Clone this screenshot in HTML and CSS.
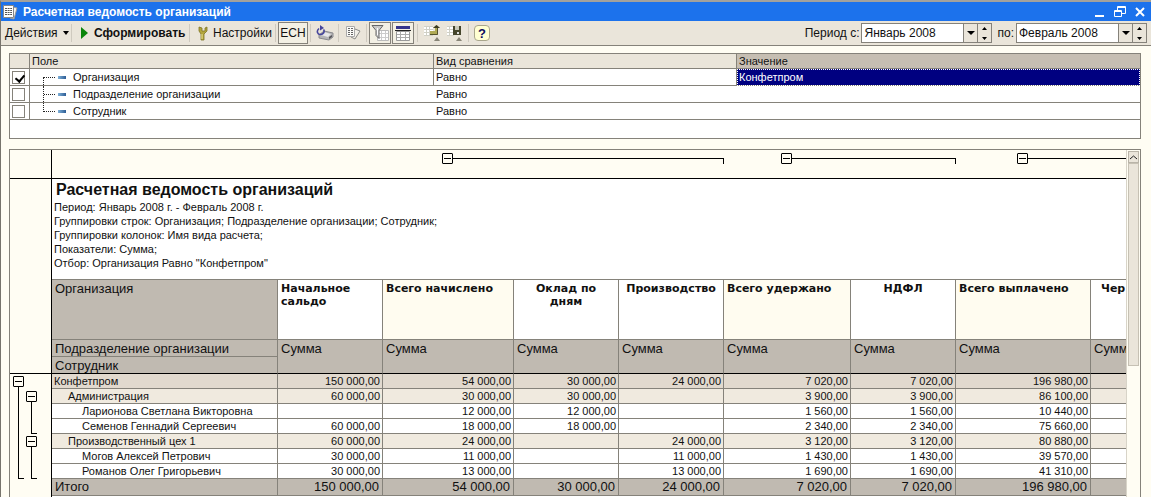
FILE: index.html
```
<!DOCTYPE html>
<html lang="ru">
<head>
  <meta charset="UTF-8">
  <meta name="viewport" content="width=device-width, initial-scale=1.0">
  <title>Расчетная ведомость организаций</title>
  <link rel="stylesheet" href="styles.css">
</head>
<body>
  <header class="titlebar">
    <svg class="title-icon" width="16" height="16" viewBox="0 0 16 16">
      <path d="M11 3l4 1-3 11-4-1z" fill="#f2f2f2" stroke="#999"/>
      <path d="M1.500 1.500h10v12h-10z" fill="#fff" stroke="#888"/>
      <path d="M3 4.500h7M3 6.500h7M3 8.500h7M3 10.500h7" stroke="#555" stroke-dasharray="2 .6"/>
    </svg>
    <h1>Расчетная ведомость организаций</h1>
    <div class="window-buttons">
      <button type="button" aria-label="Свернуть"><svg width="12" height="12"><path d="M1 10h9" stroke="#fff" stroke-width="2"/></svg></button>
      <button type="button" aria-label="Восстановить"><svg width="12" height="12"><path d="M3.500 4V.5h8v7H8M3 1.500h8M.5 4.500h7v6h-7zM1 5.500h7" fill="none" stroke="#fff"/></svg></button>
      <button type="button" aria-label="Закрыть"><svg width="12" height="12"><path d="M2 2l8 8M10 2l-8 8" stroke="#fff" stroke-width="2"/></svg></button>
    </div>
  </header>

  <div class="toolbar">
    <button type="button" class="tool actions">Действия <svg width="7" height="4"><path d="M1 0h6L4 4z"/></svg></button>
    <span class="sep"></span>
    <button type="button" class="tool run"><svg width="7" height="12"><path d="M0 0l7 6-7 6z" fill="#0a850a"/></svg>Сформировать</button>
    <span class="sep"></span>
    <button type="button" class="tool settings">
      <svg width="10" height="15" viewBox="0 0 10 15"><path d="M1 1v4l2 3v6h3V8l3-3V1L7 2v3H4V2z" fill="#b3a63c" stroke="#7d7324" stroke-width=".8"/><path d="M4 8v5" stroke="#eee59a"/></svg>Настройки</button>
    <span class="sep"></span>
    <button type="button" class="tool pressed esn">ЕСН</button>
    <span class="sep"></span>
    <button type="button" class="tool icon" aria-label="Обновить">
      <svg width="18" height="16" viewBox="0 0 18 16"><path d="M3 10l5-4 9 2v4l-4 3-10-2z" fill="#b4b4b6" stroke="#8a8a8e"/><path d="M5 10l3-3 7 2-3 3z" fill="#e6e6e8"/><path d="M13 12l3-2v2l-3 2z" fill="#55555a"/><path d="M3 3.500c-3 2.500-1.500 6 1.500 6S9 6.500 7.500 4.500" fill="none" stroke="#45459c" stroke-width="1.600"/><path d="M4 0v5.500L8 3z" fill="#45459c"/></svg>
    </button>
    <span class="sep"></span>
    <button type="button" class="tool icon" aria-label="Расшифровка">
      <svg width="16" height="16" viewBox="0 0 16 16"><path d="M10 4l5 2-5 8-4-2z" fill="#f1efe8" stroke="#8b8b88"/><path d="M1.500 1.500h8v10h-8z" fill="#fbfbf8" stroke="#aaa"/><path d="M3 3.500h5M3 5.500h5M3 7.500h5M3 9.500h5" stroke="#666" stroke-dasharray="2 1"/></svg>
    </button>
    <span class="sep"></span>
    <button type="button" class="tool pressed square" aria-label="Отбор">
      <svg width="18" height="18" viewBox="0 0 18 18"><path d="M6.500 6.500h11v10h-11z" fill="#fff" stroke="#bbb"/><path d="M7 9.500h10M7 13.500h10M10.500 7v9M14.500 7v9" stroke="#ccc"/><path d="M1 1.500h11L8 6.500v8l-3-3v-5z" fill="#c9c9c9" stroke="#666"/><path d="M6.500 4v7" stroke="#fff"/></svg>
    </button>
    <button type="button" class="tool pressed square" aria-label="Заголовок">
      <svg width="18" height="18" viewBox="0 0 18 18"><path d="M2.500 7.500h13v9h-13z" fill="#fff" stroke="#999"/><path d="M3 10.500h12M3 13.500h12M6.500 8v8M11.500 8v8" stroke="#aaa"/><path d="M2 2h14v3H2z" fill="#34348c"/><path d="M1 6.500h16" stroke="#222"/></svg>
    </button>
    <span class="sep"></span>
    <button type="button" class="tool icon" aria-label="Восстановить значения">
      <svg width="18" height="18" viewBox="0 0 18 18"><path d="M1 2h9v9H1z" fill="#fff"/><path d="M1 2.500h9M1 5.500h9M1 8.500h9M1 11.500h9M3.500 2v9M6.500 2v9" stroke="#d0d0c6"/><path d="M7 7h5V4h-2l3.500-3L17 4h-2v7H7z" fill="#b0aa55"/><path d="M10 4l3.500-3L17 4z" fill="#3c3c26"/><path d="M14.500 4v6.500H7" fill="none" stroke="#56532c"/><path d="M11 17h6l-3-4z" fill="#888577"/></svg>
    </button>
    <button type="button" class="tool icon" aria-label="Сохранить значения">
      <svg width="18" height="18" viewBox="0 0 18 18"><path d="M1 2h7v9H1z" fill="#fff"/><path d="M1 2.500h7M1 5.500h7M1 8.500h7M1 11.500h7M3.500 2v9" stroke="#d0d0c6"/><path d="M7 2h8v9H7z" fill="#45452c"/><path d="M9 2h4v4H9z" fill="#c9c9b8"/><path d="M11 8h2v2h-2z" fill="#ddd"/><path d="M10 17h6l-3-4z" fill="#888577"/></svg>
    </button>
    <span class="sep"></span>
    <button type="button" class="tool help" aria-label="Справка">?</button>

    <div class="period">
      <label for="from">Период с:</label>
      <div class="combo">
        <input type="text" id="from" value="Январь 2008">
        <button type="button" aria-label="Выбрать"><svg width="8" height="4"><path d="M0 0h8L4 4z"/></svg></button>
        <button type="button" aria-label="Изменить"><svg width="5" height="13"><path d="M0 3h5L2.500 0zM0 10h5l-2.500 3z"/></svg></button>
      </div>
      <label for="to">по:</label>
      <div class="combo">
        <input type="text" id="to" value="Февраль 2008">
        <button type="button" aria-label="Выбрать"><svg width="8" height="4"><path d="M0 0h8L4 4z"/></svg></button>
        <button type="button" aria-label="Изменить"><svg width="5" height="13"><path d="M0 3h5L2.500 0zM0 10h5l-2.500 3z"/></svg></button>
      </div>
    </div>
  </div>

  <main>
    <div class="filter">
      <table>
        <colgroup><col class="f-check"><col class="f-field"><col class="f-kind"><col></colgroup>
        <thead>
          <tr><th></th><th>Поле</th><th>Вид сравнения</th><th class="current">Значение</th></tr>
        </thead>
        <tbody>
          <tr class="active">
            <td><input type="checkbox" id="f1" checked></td>
            <td><label for="f1" class="node first">Организация</label></td>
            <td>Равно</td>
            <td class="selected">Конфетпром</td>
          </tr>
          <tr>
            <td><input type="checkbox" id="f2"></td>
            <td><label for="f2" class="node">Подразделение организации</label></td>
            <td>Равно</td>
            <td></td>
          </tr>
          <tr>
            <td><input type="checkbox" id="f3"></td>
            <td><label for="f3" class="node last">Сотрудник</label></td>
            <td>Равно</td>
            <td></td>
          </tr>
        </tbody>
      </table>
    </div>

    <div class="report">
      <div class="corner"></div>
      <div class="col-groups">
        <div class="col-group accrued"><button type="button" class="toggle" aria-label="Свернуть"></button><i></i></div>
        <div class="col-group held"><button type="button" class="toggle" aria-label="Свернуть"></button><i></i></div>
        <div class="col-group paid"><button type="button" class="toggle" aria-label="Свернуть"></button><i></i></div>
      </div>
      <div class="gutter">
        <div class="row-groups">
          <div class="row-group all"><button type="button" class="toggle" aria-label="Свернуть"></button><i></i></div>
          <div class="row-group admin"><button type="button" class="toggle" aria-label="Свернуть"></button><i></i></div>
          <div class="row-group shop"><button type="button" class="toggle" aria-label="Свернуть"></button><i></i></div>
        </div>
      </div>
      <div class="sheet">
        <div class="summary">
          <h2>Расчетная ведомость организаций</h2>
          <p>Период: Январь 2008 г. - Февраль 2008 г.</p>
          <p>Группировки строк: Организация; Подразделение организации; Сотрудник;</p>
          <p>Группировки колонок: Имя вида расчета;</p>
          <p>Показатели: Сумма;</p>
          <p>Отбор: Организация Равно "Конфетпром"</p>
        </div>
        <table class="data">
          <colgroup>
            <col class="w-name"><col class="w-sum"><col class="w-accrued"><col class="w-sum"><col class="w-sum">
            <col class="w-held"><col class="w-sum"><col class="w-paid"><col class="w-sum">
          </colgroup>
          <thead>
            <tr class="names">
              <th class="dim">Организация</th>
              <th class="left">Начальное сальдо</th>
              <th class="left total">Всего начислено</th>
              <th>Оклад по<br>дням</th>
              <th>Производство</th>
              <th class="left total">Всего удержано</th>
              <th>НДФЛ</th>
              <th class="left total">Всего выплачено</th>
              <th class="cut">Чер</th>
            </tr>
            <tr class="sums">
              <th class="dim">Подразделение организации</th>
              <th class="dim" rowspan="2">Сумма</th>
              <th class="dim" rowspan="2">Сумма</th>
              <th class="dim" rowspan="2">Сумма</th>
              <th class="dim" rowspan="2">Сумма</th>
              <th class="dim" rowspan="2">Сумма</th>
              <th class="dim" rowspan="2">Сумма</th>
              <th class="dim" rowspan="2">Сумма</th>
              <th class="dim" rowspan="2">Сумма</th>
            </tr>
            <tr class="sums"><th class="dim">Сотрудник</th></tr>
          </thead>
          <tbody>
            <tr class="org"><td>Конфетпром</td><td>150 000,00</td><td>54 000,00</td><td>30 000,00</td><td>24 000,00</td><td>7 020,00</td><td>7 020,00</td><td>196 980,00</td><td></td></tr>
            <tr class="dept"><td>Администрация</td><td>60 000,00</td><td>30 000,00</td><td>30 000,00</td><td></td><td>3 900,00</td><td>3 900,00</td><td>86 100,00</td><td></td></tr>
            <tr class="person"><td>Ларионова Светлана Викторовна</td><td></td><td>12 000,00</td><td>12 000,00</td><td></td><td>1 560,00</td><td>1 560,00</td><td>10 440,00</td><td></td></tr>
            <tr class="person"><td>Семенов Геннадий Сергеевич</td><td>60 000,00</td><td>18 000,00</td><td>18 000,00</td><td></td><td>2 340,00</td><td>2 340,00</td><td>75 660,00</td><td></td></tr>
            <tr class="dept"><td>Производственный цех 1</td><td>60 000,00</td><td>24 000,00</td><td></td><td>24 000,00</td><td>3 120,00</td><td>3 120,00</td><td>80 880,00</td><td></td></tr>
            <tr class="person"><td>Могов Алексей Петрович</td><td>30 000,00</td><td>11 000,00</td><td></td><td>11 000,00</td><td>1 430,00</td><td>1 430,00</td><td>39 570,00</td><td></td></tr>
            <tr class="person"><td>Романов Олег Григорьевич</td><td>30 000,00</td><td>13 000,00</td><td></td><td>13 000,00</td><td>1 690,00</td><td>1 690,00</td><td>41 310,00</td><td></td></tr>
          </tbody>
          <tfoot>
            <tr><td>Итого</td><td>150 000,00</td><td>54 000,00</td><td>30 000,00</td><td>24 000,00</td><td>7 020,00</td><td>7 020,00</td><td>196 980,00</td><td></td></tr>
          </tfoot>
        </table>
      </div>
      <div class="scrollbar">
        <button type="button" aria-label="Вверх"><svg width="7" height="5"><path d="M0 4l3.500-3L7 4" fill="none" stroke="#222"/></svg></button>
        <div class="thumb"></div>
      </div>
    </div>
  </main>
</body>
</html>
```
FILE: styles.css
```
* {
  box-sizing: border-box;
}

body {
  margin: 0;
  height: 100vh;
  display: flex;
  flex-direction: column;
  overflow: hidden;
  font-family: "Liberation Sans", Arial, sans-serif;
  font-size: 12px;
  color: #111;
  background: #fffdf3;
  border-top: 2px solid #a3a19c;
  border-left: 1px solid #77746c;
}

h1, h2, p {
  margin: 0;
}

button, input {
  margin: 0;
  padding: 0;
  font: inherit;
  color: inherit;
  border: none;
  background: none;
}

/* window title */
.titlebar {
  height: 19px;
  flex: none;
  display: flex;
  align-items: center;
  padding: 0 5px 0 1px;
  background: #1c72ec;
  color: #fff;
}

.titlebar h1 {
  flex: 1;
  margin-left: 5px;
  font-size: 12px;
  line-height: 16px;
}

.window-buttons {
  display: flex;
  gap: 8px;
}

.window-buttons button,
.window-buttons svg {
  display: block;
  width: 12px;
  height: 12px;
}

/* toolbar */
.toolbar {
  height: 25px;
  flex: none;
  display: flex;
  align-items: center;
  padding: 0 4px;
  background: #eae5da;
  border-bottom: 1px solid #85827a;
}

.tool {
  display: flex;
  align-items: center;
  height: 22px;
  white-space: nowrap;
}

.sep {
  width: 1px;
  height: 18px;
  margin: 0 2px;
  background: #cfcabf;
}

.actions {
  width: 64px;
  gap: 4px;
}

.run {
  width: 113px;
  padding-left: 7px;
  gap: 6px;
  font-weight: bold;
}

.settings {
  width: 81px;
  padding-left: 6px;
  gap: 5px;
}

.pressed {
  justify-content: center;
  background: #f3f0e4;
  border: 1px solid #85827a;
}

.esn {
  width: 30px;
}

.square {
  width: 22px;
  margin-right: 1px;
}

.icon {
  width: 23px;
  justify-content: center;
}

.help {
  width: 16px;
  height: 16px;
  margin-left: 3px;
  justify-content: center;
  font-size: 13px;
  font-weight: bold;
  color: #0c0c60;
  background: #ffffd2;
  border: 1px solid #a9a68c;
  border-radius: 4px;
}

.period {
  display: flex;
  align-items: center;
  margin-left: auto;
}

.period label {
  margin: 0 2px 0 5px;
}

.combo {
  display: flex;
  width: 131px;
  height: 20px;
  border: 1px solid #85827a;
  background: #fff;
}

.combo input {
  flex: 1;
  min-width: 0;
  padding-left: 2px;
}

.combo button {
  width: 14px;
  display: flex;
  align-items: center;
  justify-content: center;
  background: #eae5da;
  border-left: 1px solid #85827a;
}

main {
  flex: 1;
  min-height: 0;
  display: flex;
  flex-direction: column;
  gap: 10px;
  padding: 7px 10px 0 8px;
}

/* filter */
.filter {
  height: 86px;
  flex: none;
  border: 1px solid #85827a;
  background: #fff;
}

.filter table {
  width: 100%;
  table-layout: fixed;
  border-spacing: 0;
  font-size: 11px;
  line-height: 14px;
}

.f-check {
  width: 20px;
}

.f-field {
  width: 404px;
}

.f-kind {
  width: 303px;
}

.filter th,
.filter td {
  height: 17px;
  padding: 0 0 0 2px;
  border-bottom: 1px solid #85827a;
  white-space: nowrap;
}

.filter th {
  height: 15px;
  font-weight: normal;
  text-align: left;
  background: #eae5da;
}

.filter th:not(:last-child),
.filter td:first-child,
.filter .active td:not(:last-child) {
  border-right: 1px solid #85827a;
}

.filter th.current {
  background: #c6beb2;
}

.filter td.selected {
  color: #fff;
  background: #000080;
  outline: 1px dotted #fff;
  outline-offset: -1px;
}

.filter input {
  display: block;
  width: 13px;
  height: 13px;
  appearance: none;
  border: 1px solid #85827a;
  background: #fff;
}

.filter input:checked::after {
  content: "";
  display: block;
  width: 4px;
  height: 7px;
  margin: 1px 0 0 4px;
  border: solid #000;
  border-width: 0 2px 2px 0;
  transform: rotate(40deg);
}

/* dotted tree line with a small bar in front of the name */
.node {
  display: flex;
  align-items: center;
  position: relative;
  height: 16px;
  padding-left: 41px;
}

.node::before {
  content: "";
  position: absolute;
  left: 11px;
  top: 0;
  width: 11px;
  height: 16px;
  border-left: 1px dotted #222;
  background: repeating-linear-gradient(90deg, #222 0 1px, transparent 1px 2px) 0 8px / 100% 1px no-repeat;
}

.node.first::before {
  top: 8px;
  height: 8px;
  background-position: 0 0;
}

.node.last::before {
  height: 9px;
}

.node::after {
  content: "";
  position: absolute;
  left: 26px;
  top: 7px;
  width: 8px;
  height: 3px;
  background: linear-gradient(90deg, #7fb0d8, #2c5c94);
}

/* report */
.report {
  flex: 1;
  min-height: 0;
  display: grid;
  grid-template-columns: 42px minmax(0, 1fr) 14px;
  grid-template-rows: 29px minmax(0, 1fr);
  border: 1px solid #85827a;
  border-bottom: none;
}

.corner,
.gutter {
  border-right: 1px solid #000;
}

.corner,
.col-groups {
  border-bottom: 1px solid #000;
}

.col-groups {
  display: grid;
  grid-template-columns: 226px 105px 131px 105px 105px 127px 105px 135px 105px;
  overflow: hidden;
}

.col-group {
  display: flex;
  margin-top: 3px;
  padding-left: 59px;
}

.accrued {
  grid-column: 3 / 6;
}

.held {
  grid-column: 6 / 8;
  padding-left: 57px;
}

.paid {
  grid-column: 8 / 10;
  padding-left: 61px;
}

.col-group i {
  flex: 1;
  height: 6px;
  margin-top: 5px;
  border: solid #000;
  border-width: 1px 1px 0 0;
}

.toggle {
  flex: none;
  width: 11px;
  height: 11px;
  border: 1px solid #000;
  border-radius: 1px;
  background: linear-gradient(#000, #000) center / 7px 1px no-repeat;
}

.gutter {
  padding-top: 194px;
}

.row-groups {
  display: grid;
  grid-template-columns: 13px 13px;
  grid-template-rows: repeat(7, 15px);
  padding-left: 3px;
  border-top: 1px solid #000;
}

.row-group {
  display: flex;
  flex-direction: column;
  padding-top: 2px;
}

.row-group i {
  flex: 1;
  width: 6px;
  margin-left: 5px;
  border: solid #000;
  border-width: 0 0 1px 1px;
}

.all {
  grid-area: 1 / 1 / 8 / 2;
}

.admin {
  grid-area: 2 / 2 / 5 / 3;
}

.shop {
  grid-area: 5 / 2 / 8 / 3;
}

.sheet {
  overflow: hidden;
  background: #fff;
}

.summary {
  height: 100px;
  padding: 1px 0 0 2px;
  font-size: 11px;
  line-height: 14px;
}

.summary h2 {
  padding-left: 2px;
  font-size: 16px;
  line-height: 20px;
}

.data {
  width: 1144px;
  table-layout: fixed;
  border-spacing: 0;
  border-top: 1px solid #85827a;
  font-size: 11px;
  line-height: 14px;
}

.w-name {
  width: 226px;
}

.w-sum {
  width: 105px;
}

.w-accrued {
  width: 131px;
}

.w-held {
  width: 127px;
}

.w-paid {
  width: 135px;
}

.data th,
.data td {
  height: 15px;
  padding: 0 2px;
  border: solid #85827a;
  border-width: 0 1px 1px 0;
  text-align: right;
  white-space: nowrap;
}

.data th {
  padding: 2px 3px 0;
  font-family: "DejaVu Sans", Verdana, sans-serif;
  font-size: 11px;
  line-height: 13px;
  text-align: center;
  vertical-align: top;
  white-space: normal;
}

.data .names th {
  height: 60px;
}

.data .sums th {
  height: 17px;
}

.data th.left {
  text-align: left;
}

.data th.cut {
  padding-left: 10px;
  text-align: left;
}

.data th.total {
  background: #fffcf0;
}

.data th.dim {
  padding-top: 1px;
  font-family: inherit;
  font-size: 13px;
  font-weight: normal;
  line-height: 15px;
  text-align: left;
  white-space: nowrap;
  background: #c0bab1;
}

.data thead tr:last-child th,
.data th[rowspan] {
  border-bottom-color: #000;
}

.data td:first-child {
  text-align: left;
}

.org td {
  background: #e1d9ce;
}

.dept td {
  background: #f0eadf;
}

.data .dept td:first-child {
  padding-left: 16px;
}

.data .person td:first-child {
  padding-left: 30px;
}

.data tfoot td {
  height: 17px;
  padding: 0 3px;
  font-size: 13px;
  background: #c0bab1;
}

.scrollbar {
  grid-column: 3;
  grid-row: 1 / 3;
  display: flex;
  flex-direction: column;
  align-items: center;
  padding-top: 1px;
  background: #fffdf3;
  border-left: 1px solid #d8d4c8;
}

.scrollbar button {
  display: flex;
  align-items: center;
  justify-content: center;
  width: 11px;
  height: 12px;
  background: #eae5da;
  border: 1px solid #b9b4a8;
}

.thumb {
  width: 11px;
  height: 203px;
  background: #eae5da;
  border: 1px solid #c6c1b4;
}
```
